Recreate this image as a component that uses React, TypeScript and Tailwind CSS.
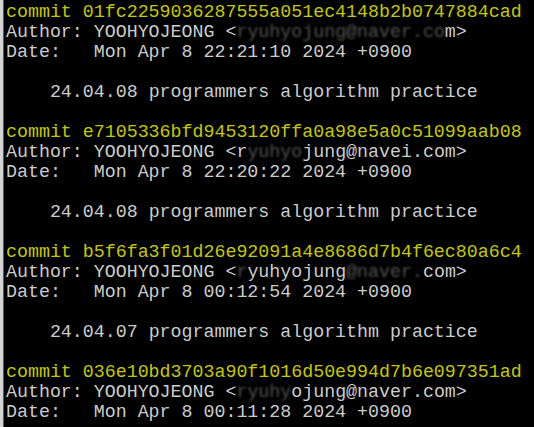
import React from "react";

type Commit = {
  hash: string;
  email: React.ReactNode;
  date: string;
  msg: string;
};

const Fade = ({ children }: { children: React.ReactNode }) => (
  <span className="opacity-40 blur-[1px]">{children}</span>
);

const commits: Commit[] = [
  {
    hash: "01fc2259036287555a051ec4148b2b0747884cad",
    email: (
      <>
        &lt;<Fade>ryuhyojung@naver.co</Fade>m&gt;
      </>
    ),
    date: "Mon Apr 8 22:21:10 2024 +0900",
    msg: "24.04.08 programmers algorithm practice",
  },
  {
    hash: "e7105336bfd9453120ffa0a98e5a0c51099aab08",
    email: (
      <>
        &lt;r<Fade>yuhyo</Fade>jung@navei.com&gt;
      </>
    ),
    date: "Mon Apr 8 22:20:22 2024 +0900",
    msg: "24.04.08 programmers algorithm practice",
  },
  {
    hash: "b5f6fa3f01d26e92091a4e8686d7b4f6ec80a6c4",
    email: (
      <>
        &lt;<Fade>r</Fade>yuhyojung<Fade>@naver.</Fade>com&gt;
      </>
    ),
    date: "Mon Apr 8 00:12:54 2024 +0900",
    msg: "24.04.07 programmers algorithm practice",
  },
  {
    hash: "036e10bd3703a90f1016d50e994d7b6e097351ad",
    email: (
      <>
        &lt;<Fade>ryuhy</Fade>ojung@naver.com&gt;
      </>
    ),
    date: "Mon Apr 8 00:11:28 2024 +0900",
    msg: "",
  },
];

export default function App() {
  return (
    <div className="flex h-[427px] w-[534px] overflow-hidden bg-black">
      {/* window edge */}
      <div className="w-[3px] shrink-0 bg-[#d4d4d4]" />
      <div className="w-[1px] shrink-0 bg-[#5a5a5a]" />
      <pre
        className="m-0 pl-[2px] pt-[2px] text-[18.3px] leading-[20px] text-[#cccccc]"
        style={{ fontFamily: '"Liberation Mono", "DejaVu Sans Mono", monospace' }}
      >
        {commits.map((c, i) => (
          <React.Fragment key={i}>
            <div className="text-[#c5c800]">commit {c.hash}</div>
            <div>Author: YOOHYOJEONG {c.email}</div>
            <div>Date:   {c.date}</div>
            {c.msg && (
              <>
                <div>&nbsp;</div>
                <div>    {c.msg}</div>
                <div>&nbsp;</div>
              </>
            )}
          </React.Fragment>
        ))}
      </pre>
    </div>
  );
}
